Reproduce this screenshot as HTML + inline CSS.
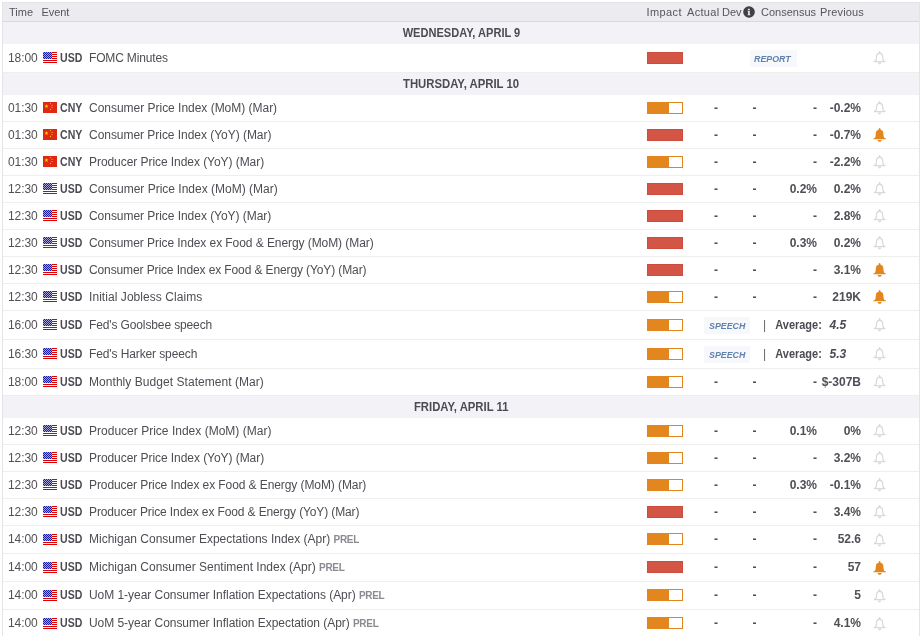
<!DOCTYPE html>
<html><head><meta charset="utf-8"><title>Economic Calendar</title><style>
*{margin:0;padding:0;box-sizing:border-box}
html,body{width:922px;height:636px;overflow:hidden;background:#fff}
body{position:relative;font-family:"Liberation Sans",sans-serif;color:#555}
.wrap{position:absolute;left:0;top:0;width:922px;height:636px;overflow:hidden;will-change:transform}
.frame{position:absolute;left:2px;top:2px;width:918px;height:700px;border:1px solid #e3e4e7;border-bottom:none}
.hdr{position:absolute;left:3px;top:3px;width:916px;height:19px;background:#ebebf0;border-bottom:1px solid #d9d9de;font-size:11px;line-height:18px;color:#55555c}
.hdr span{position:absolute;top:0}
.info{position:absolute;left:743px;top:6px;width:12px;height:12px}
.day{position:absolute;left:3px;width:916px;height:22px;background:#f2f2f7;text-align:center;font-weight:bold;font-size:12.5px;line-height:22px;color:#4b4b52}
.day span{display:inline-block;transform:scaleX(0.88)}
.row{position:absolute;left:3px;width:916px;border-bottom:1px solid #eeeeee;background:#fff;font-size:12px;white-space:nowrap}
.row>*{position:absolute}
.tm{left:5px;color:#505056;letter-spacing:-0.1px}
.fl{left:40px;top:50%;margin-top:-6px}
.cur{left:56.5px;font-weight:bold;font-size:12px;color:#4b4b52;transform:scaleX(0.88);transform-origin:0 0}
.nm{left:86px;color:#4d4d53;letter-spacing:-0.1px}
.prel{font-size:10px;color:#8a8a90;font-weight:bold;letter-spacing:-0.3px}
.imp{left:644px;top:50%;margin-top:-6px;width:36px;height:12px}
.imp.i3{background:#d35546;border:1px solid #cf4b3b}
.imp.i2{background:#fff;border:1px solid #e2841c}
.imp.i2 i{position:absolute;left:-1px;top:-1px;width:22px;height:12px;background:#e3861e}
.v{font-weight:bold;font-size:12px;color:#4f4f56}
.act{left:711px}
.dev{left:749.5px}
.cons{right:102px;text-align:right}
.prev{right:58px;text-align:right}
.bell{left:870px;top:6px}
.badge{top:50%;margin-top:-8px;height:17px;line-height:17px;background:#f7f8fb;color:#5f82ac;font-weight:bold;font-style:italic;font-size:9.8px;text-align:center}
.badge span{display:inline-block;transform:scaleX(0.9)}
.rep{left:747px;width:47px;text-indent:-1px}
.sp{left:701px;width:46px}
.bar{left:760px;font-size:12px;color:#666}
.avg{left:772px;font-weight:bold;font-size:12px;color:#4b4b52;transform:scaleX(0.915);transform-origin:3px 0}
.avgv{left:826.5px;font-weight:bold;font-style:italic;font-size:12px;color:#4b4b52}
</style></head>
<body><div class="wrap">
<svg width="0" height="0" style="position:absolute"><defs><pattern id="dots" width="2" height="2" patternUnits="userSpaceOnUse"><rect x="0" y="0" width="1" height="1" fill="#fff" fill-opacity="0.6"/><rect x="1" y="1" width="1" height="1" fill="#fff" fill-opacity="0.6"/></pattern></defs></svg>
<div class="frame"></div>
<div class="hdr"><span style="left:6px">Time</span><span style="left:38.5px;letter-spacing:-0.1px">Event</span><span style="left:643.5px;letter-spacing:0.4px">Impact</span><span style="left:684px;letter-spacing:0.3px">Actual</span><span style="left:719px">Dev</span><span style="left:758px">Consensus</span><span style="left:817px;letter-spacing:0.15px">Previous</span></div>
<svg class="info" viewBox="0 0 12 12"><circle cx="6" cy="6" r="5.8" fill="#3f3f46"/><rect x="4.9" y="2.8" width="1.9" height="1.3" fill="#e8e8ea"/><path d="M4.5 4.7 H6.8 V8.4 H7.4 V9.3 H4.5 V8.4 H5.1 V5.5 H4.5 Z" fill="#e8e8ea"/></svg>
<div class="day" style="top:22px"><span style="transform:scaleX(0.885)">WEDNESDAY, APRIL 9</span></div><div class="row" style="top:44px;height:29px;line-height:28px"><span class="tm">18:00</span><svg class="fl" width="14" height="11" viewBox="0 0 14 11"><rect width="14" height="11" fill="#fff"/><g fill="#d00"><rect y="0" width="14" height="1"/><rect y="2" width="14" height="1"/><rect y="4" width="14" height="1"/><rect y="6" width="14" height="1"/><rect y="8" width="14" height="1"/><rect y="10" width="14" height="1"/></g><rect width="9" height="7" fill="#1a1aa0"/><rect width="9" height="7" fill="url(#dots)"/></svg><span class="cur">USD</span><span class="nm" style="letter-spacing:-0.158px">FOMC Minutes</span><span class="imp i3" style="top:8px;margin-top:0"><i></i></span><span class="badge rep"><span>REPORT</span></span><svg class="bell" style="top:7px" width="13" height="14" viewBox="0 0 13 14"><ellipse cx="6.6" cy="1.2" rx="0.9" ry="1.2" fill="#d9d9db"/><path d="M6.6 2.4 C8.5 2.4 9.5 3.3 9.6 5.2 L9.9 8.4 C10 9.5 10.8 10.1 12 10.6 L1.2 10.6 C2.4 10.1 3.2 9.5 3.3 8.4 L3.6 5.2 C3.7 3.3 4.7 2.4 6.6 2.4 Z" fill="none" stroke="#d9d9db" stroke-width="1.2" stroke-linejoin="round"/><path d="M4.9 11.6 A1.7 1.8 0 0 0 8.3 11.6 Z" fill="#d9d9db"/></svg></div><div class="day" style="top:73px"><span style="transform:scaleX(0.907)">THURSDAY, APRIL 10</span></div><div class="row" style="top:95px;height:27px;line-height:26px"><span class="tm">01:30</span><svg class="fl" width="14" height="11" viewBox="0 0 14 11"><rect width="14" height="11" fill="#de2a12"/><path d="M3.5 2.2 L3.85 3.35 L5.05 3.35 L4.08 4.05 L4.45 5.2 L3.5 4.5 L2.55 5.2 L2.92 4.05 L1.95 3.35 L3.15 3.35 Z" fill="#ffe000" transform="translate(3.5 3.9) scale(1.35) translate(-3.5 -3.7)"/><g fill="#ffc000"><circle cx="7.5" cy="1.5" r="0.6"/><circle cx="9" cy="3.3" r="0.6"/><circle cx="9" cy="5.5" r="0.6"/><circle cx="7.5" cy="7.4" r="0.6"/></g></svg><span class="cur">CNY</span><span class="nm" style="letter-spacing:-0.019px">Consumer Price Index (MoM) (Mar)</span><span class="imp i2" style="top:7px;margin-top:0"><i></i></span><span class="v act">-</span><span class="v dev">-</span><span class="v cons">-</span><span class="v prev">-0.2%</span><svg class="bell" style="top:6px" width="13" height="14" viewBox="0 0 13 14"><ellipse cx="6.6" cy="1.2" rx="0.9" ry="1.2" fill="#d9d9db"/><path d="M6.6 2.4 C8.5 2.4 9.5 3.3 9.6 5.2 L9.9 8.4 C10 9.5 10.8 10.1 12 10.6 L1.2 10.6 C2.4 10.1 3.2 9.5 3.3 8.4 L3.6 5.2 C3.7 3.3 4.7 2.4 6.6 2.4 Z" fill="none" stroke="#d9d9db" stroke-width="1.2" stroke-linejoin="round"/><path d="M4.9 11.6 A1.7 1.8 0 0 0 8.3 11.6 Z" fill="#d9d9db"/></svg></div><div class="row" style="top:122px;height:27px;line-height:26px"><span class="tm">01:30</span><svg class="fl" width="14" height="11" viewBox="0 0 14 11"><rect width="14" height="11" fill="#de2a12"/><path d="M3.5 2.2 L3.85 3.35 L5.05 3.35 L4.08 4.05 L4.45 5.2 L3.5 4.5 L2.55 5.2 L2.92 4.05 L1.95 3.35 L3.15 3.35 Z" fill="#ffe000" transform="translate(3.5 3.9) scale(1.35) translate(-3.5 -3.7)"/><g fill="#ffc000"><circle cx="7.5" cy="1.5" r="0.6"/><circle cx="9" cy="3.3" r="0.6"/><circle cx="9" cy="5.5" r="0.6"/><circle cx="7.5" cy="7.4" r="0.6"/></g></svg><span class="cur">CNY</span><span class="nm" style="letter-spacing:-0.038px">Consumer Price Index (YoY) (Mar)</span><span class="imp i3" style="top:7px;margin-top:0"><i></i></span><span class="v act">-</span><span class="v dev">-</span><span class="v cons">-</span><span class="v prev">-0.7%</span><svg class="bell" style="top:6px" width="13" height="14" viewBox="0 0 13 14"><ellipse cx="6.6" cy="1.2" rx="0.9" ry="1.2" fill="#e3861e"/><path d="M6.6 1.8 C8.9 1.8 10.2 3 10.3 5 L10.7 8.5 C10.9 9.8 11.8 10.3 12.9 10.6 L12.9 11.2 L0.3 11.2 L0.3 10.6 C1.4 10.3 2.3 9.8 2.5 8.5 L2.9 5 C3 3 4.3 1.8 6.6 1.8 Z" fill="#e3861e"/><path d="M4.6 11.9 A2 1.9 0 0 0 8.6 11.9 Z" fill="#e3861e"/></svg></div><div class="row" style="top:149px;height:27px;line-height:26px"><span class="tm">01:30</span><svg class="fl" width="14" height="11" viewBox="0 0 14 11"><rect width="14" height="11" fill="#de2a12"/><path d="M3.5 2.2 L3.85 3.35 L5.05 3.35 L4.08 4.05 L4.45 5.2 L3.5 4.5 L2.55 5.2 L2.92 4.05 L1.95 3.35 L3.15 3.35 Z" fill="#ffe000" transform="translate(3.5 3.9) scale(1.35) translate(-3.5 -3.7)"/><g fill="#ffc000"><circle cx="7.5" cy="1.5" r="0.6"/><circle cx="9" cy="3.3" r="0.6"/><circle cx="9" cy="5.5" r="0.6"/><circle cx="7.5" cy="7.4" r="0.6"/></g></svg><span class="cur">CNY</span><span class="nm" style="letter-spacing:-0.059px">Producer Price Index (YoY) (Mar)</span><span class="imp i2" style="top:7px;margin-top:0"><i></i></span><span class="v act">-</span><span class="v dev">-</span><span class="v cons">-</span><span class="v prev">-2.2%</span><svg class="bell" style="top:6px" width="13" height="14" viewBox="0 0 13 14"><ellipse cx="6.6" cy="1.2" rx="0.9" ry="1.2" fill="#d9d9db"/><path d="M6.6 2.4 C8.5 2.4 9.5 3.3 9.6 5.2 L9.9 8.4 C10 9.5 10.8 10.1 12 10.6 L1.2 10.6 C2.4 10.1 3.2 9.5 3.3 8.4 L3.6 5.2 C3.7 3.3 4.7 2.4 6.6 2.4 Z" fill="none" stroke="#d9d9db" stroke-width="1.2" stroke-linejoin="round"/><path d="M4.9 11.6 A1.7 1.8 0 0 0 8.3 11.6 Z" fill="#d9d9db"/></svg></div><div class="row" style="top:176px;height:27px;line-height:26px"><span class="tm">12:30</span><svg class="fl" width="14" height="11" viewBox="0 0 14 11"><rect width="14" height="11" fill="#fff"/><g fill="#d00"><rect y="0" width="14" height="1"/><rect y="2" width="14" height="1"/><rect y="4" width="14" height="1"/><rect y="6" width="14" height="1"/><rect y="8" width="14" height="1"/><rect y="10" width="14" height="1"/></g><rect width="9" height="7" fill="#1a1aa0"/><rect width="9" height="7" fill="url(#dots)"/></svg><span class="cur">USD</span><span class="nm" style="letter-spacing:-0.000px">Consumer Price Index (MoM) (Mar)</span><span class="imp i3" style="top:7px;margin-top:0"><i></i></span><span class="v act">-</span><span class="v dev">-</span><span class="v cons">0.2%</span><span class="v prev">0.2%</span><svg class="bell" style="top:6px" width="13" height="14" viewBox="0 0 13 14"><ellipse cx="6.6" cy="1.2" rx="0.9" ry="1.2" fill="#d9d9db"/><path d="M6.6 2.4 C8.5 2.4 9.5 3.3 9.6 5.2 L9.9 8.4 C10 9.5 10.8 10.1 12 10.6 L1.2 10.6 C2.4 10.1 3.2 9.5 3.3 8.4 L3.6 5.2 C3.7 3.3 4.7 2.4 6.6 2.4 Z" fill="none" stroke="#d9d9db" stroke-width="1.2" stroke-linejoin="round"/><path d="M4.9 11.6 A1.7 1.8 0 0 0 8.3 11.6 Z" fill="#d9d9db"/></svg></div><div class="row" style="top:203px;height:27px;line-height:26px"><span class="tm">12:30</span><svg class="fl" width="14" height="11" viewBox="0 0 14 11"><rect width="14" height="11" fill="#fff"/><g fill="#d00"><rect y="0" width="14" height="1"/><rect y="2" width="14" height="1"/><rect y="4" width="14" height="1"/><rect y="6" width="14" height="1"/><rect y="8" width="14" height="1"/><rect y="10" width="14" height="1"/></g><rect width="9" height="7" fill="#1a1aa0"/><rect width="9" height="7" fill="url(#dots)"/></svg><span class="cur">USD</span><span class="nm" style="letter-spacing:-0.044px">Consumer Price Index (YoY) (Mar)</span><span class="imp i3" style="top:7px;margin-top:0"><i></i></span><span class="v act">-</span><span class="v dev">-</span><span class="v cons">-</span><span class="v prev">2.8%</span><svg class="bell" style="top:6px" width="13" height="14" viewBox="0 0 13 14"><ellipse cx="6.6" cy="1.2" rx="0.9" ry="1.2" fill="#d9d9db"/><path d="M6.6 2.4 C8.5 2.4 9.5 3.3 9.6 5.2 L9.9 8.4 C10 9.5 10.8 10.1 12 10.6 L1.2 10.6 C2.4 10.1 3.2 9.5 3.3 8.4 L3.6 5.2 C3.7 3.3 4.7 2.4 6.6 2.4 Z" fill="none" stroke="#d9d9db" stroke-width="1.2" stroke-linejoin="round"/><path d="M4.9 11.6 A1.7 1.8 0 0 0 8.3 11.6 Z" fill="#d9d9db"/></svg></div><div class="row" style="top:230px;height:27px;line-height:26px"><span class="tm">12:30</span><svg class="fl" width="14" height="11" viewBox="0 0 14 11"><rect width="14" height="11" fill="#fff"/><g fill="#d00"><rect y="0" width="14" height="1"/><rect y="2" width="14" height="1"/><rect y="4" width="14" height="1"/><rect y="6" width="14" height="1"/><rect y="8" width="14" height="1"/><rect y="10" width="14" height="1"/></g><rect width="9" height="7" fill="#1a1aa0"/><rect width="9" height="7" fill="url(#dots)"/></svg><span class="cur">USD</span><span class="nm" style="letter-spacing:-0.071px">Consumer Price Index ex Food &amp; Energy (MoM) (Mar)</span><span class="imp i3" style="top:7px;margin-top:0"><i></i></span><span class="v act">-</span><span class="v dev">-</span><span class="v cons">0.3%</span><span class="v prev">0.2%</span><svg class="bell" style="top:6px" width="13" height="14" viewBox="0 0 13 14"><ellipse cx="6.6" cy="1.2" rx="0.9" ry="1.2" fill="#d9d9db"/><path d="M6.6 2.4 C8.5 2.4 9.5 3.3 9.6 5.2 L9.9 8.4 C10 9.5 10.8 10.1 12 10.6 L1.2 10.6 C2.4 10.1 3.2 9.5 3.3 8.4 L3.6 5.2 C3.7 3.3 4.7 2.4 6.6 2.4 Z" fill="none" stroke="#d9d9db" stroke-width="1.2" stroke-linejoin="round"/><path d="M4.9 11.6 A1.7 1.8 0 0 0 8.3 11.6 Z" fill="#d9d9db"/></svg></div><div class="row" style="top:257px;height:27px;line-height:26px"><span class="tm">12:30</span><svg class="fl" width="14" height="11" viewBox="0 0 14 11"><rect width="14" height="11" fill="#fff"/><g fill="#d00"><rect y="0" width="14" height="1"/><rect y="2" width="14" height="1"/><rect y="4" width="14" height="1"/><rect y="6" width="14" height="1"/><rect y="8" width="14" height="1"/><rect y="10" width="14" height="1"/></g><rect width="9" height="7" fill="#1a1aa0"/><rect width="9" height="7" fill="url(#dots)"/></svg><span class="cur">USD</span><span class="nm" style="letter-spacing:-0.114px">Consumer Price Index ex Food &amp; Energy (YoY) (Mar)</span><span class="imp i3" style="top:7px;margin-top:0"><i></i></span><span class="v act">-</span><span class="v dev">-</span><span class="v cons">-</span><span class="v prev">3.1%</span><svg class="bell" style="top:6px" width="13" height="14" viewBox="0 0 13 14"><ellipse cx="6.6" cy="1.2" rx="0.9" ry="1.2" fill="#e3861e"/><path d="M6.6 1.8 C8.9 1.8 10.2 3 10.3 5 L10.7 8.5 C10.9 9.8 11.8 10.3 12.9 10.6 L12.9 11.2 L0.3 11.2 L0.3 10.6 C1.4 10.3 2.3 9.8 2.5 8.5 L2.9 5 C3 3 4.3 1.8 6.6 1.8 Z" fill="#e3861e"/><path d="M4.6 11.9 A2 1.9 0 0 0 8.6 11.9 Z" fill="#e3861e"/></svg></div><div class="row" style="top:284px;height:27px;line-height:26px"><span class="tm">12:30</span><svg class="fl" width="14" height="11" viewBox="0 0 14 11"><rect width="14" height="11" fill="#fff"/><g fill="#d00"><rect y="0" width="14" height="1"/><rect y="2" width="14" height="1"/><rect y="4" width="14" height="1"/><rect y="6" width="14" height="1"/><rect y="8" width="14" height="1"/><rect y="10" width="14" height="1"/></g><rect width="9" height="7" fill="#1a1aa0"/><rect width="9" height="7" fill="url(#dots)"/></svg><span class="cur">USD</span><span class="nm" style="letter-spacing:0.059px">Initial Jobless Claims</span><span class="imp i2" style="top:7px;margin-top:0"><i></i></span><span class="v act">-</span><span class="v dev">-</span><span class="v cons">-</span><span class="v prev">219K</span><svg class="bell" style="top:6px" width="13" height="14" viewBox="0 0 13 14"><ellipse cx="6.6" cy="1.2" rx="0.9" ry="1.2" fill="#e3861e"/><path d="M6.6 1.8 C8.9 1.8 10.2 3 10.3 5 L10.7 8.5 C10.9 9.8 11.8 10.3 12.9 10.6 L12.9 11.2 L0.3 11.2 L0.3 10.6 C1.4 10.3 2.3 9.8 2.5 8.5 L2.9 5 C3 3 4.3 1.8 6.6 1.8 Z" fill="#e3861e"/><path d="M4.6 11.9 A2 1.9 0 0 0 8.6 11.9 Z" fill="#e3861e"/></svg></div><div class="row" style="top:311px;height:29px;line-height:28px"><span class="tm">16:00</span><svg class="fl" width="14" height="11" viewBox="0 0 14 11"><rect width="14" height="11" fill="#fff"/><g fill="#d00"><rect y="0" width="14" height="1"/><rect y="2" width="14" height="1"/><rect y="4" width="14" height="1"/><rect y="6" width="14" height="1"/><rect y="8" width="14" height="1"/><rect y="10" width="14" height="1"/></g><rect width="9" height="7" fill="#1a1aa0"/><rect width="9" height="7" fill="url(#dots)"/></svg><span class="cur">USD</span><span class="nm" style="letter-spacing:-0.124px">Fed's Goolsbee speech</span><span class="imp i2" style="top:8px;margin-top:0"><i></i></span><span class="badge sp"><span>SPEECH</span></span><span class="bar">|</span><span class="avg">Average:</span><span class="avgv">4.5</span><svg class="bell" style="top:7px" width="13" height="14" viewBox="0 0 13 14"><ellipse cx="6.6" cy="1.2" rx="0.9" ry="1.2" fill="#d9d9db"/><path d="M6.6 2.4 C8.5 2.4 9.5 3.3 9.6 5.2 L9.9 8.4 C10 9.5 10.8 10.1 12 10.6 L1.2 10.6 C2.4 10.1 3.2 9.5 3.3 8.4 L3.6 5.2 C3.7 3.3 4.7 2.4 6.6 2.4 Z" fill="none" stroke="#d9d9db" stroke-width="1.2" stroke-linejoin="round"/><path d="M4.9 11.6 A1.7 1.8 0 0 0 8.3 11.6 Z" fill="#d9d9db"/></svg></div><div class="row" style="top:340px;height:29px;line-height:28px"><span class="tm">16:30</span><svg class="fl" width="14" height="11" viewBox="0 0 14 11"><rect width="14" height="11" fill="#fff"/><g fill="#d00"><rect y="0" width="14" height="1"/><rect y="2" width="14" height="1"/><rect y="4" width="14" height="1"/><rect y="6" width="14" height="1"/><rect y="8" width="14" height="1"/><rect y="10" width="14" height="1"/></g><rect width="9" height="7" fill="#1a1aa0"/><rect width="9" height="7" fill="url(#dots)"/></svg><span class="cur">USD</span><span class="nm" style="letter-spacing:-0.111px">Fed's Harker speech</span><span class="imp i2" style="top:8px;margin-top:0"><i></i></span><span class="badge sp"><span>SPEECH</span></span><span class="bar">|</span><span class="avg">Average:</span><span class="avgv">5.3</span><svg class="bell" style="top:7px" width="13" height="14" viewBox="0 0 13 14"><ellipse cx="6.6" cy="1.2" rx="0.9" ry="1.2" fill="#d9d9db"/><path d="M6.6 2.4 C8.5 2.4 9.5 3.3 9.6 5.2 L9.9 8.4 C10 9.5 10.8 10.1 12 10.6 L1.2 10.6 C2.4 10.1 3.2 9.5 3.3 8.4 L3.6 5.2 C3.7 3.3 4.7 2.4 6.6 2.4 Z" fill="none" stroke="#d9d9db" stroke-width="1.2" stroke-linejoin="round"/><path d="M4.9 11.6 A1.7 1.8 0 0 0 8.3 11.6 Z" fill="#d9d9db"/></svg></div><div class="row" style="top:369px;height:27px;line-height:26px"><span class="tm">18:00</span><svg class="fl" width="14" height="11" viewBox="0 0 14 11"><rect width="14" height="11" fill="#fff"/><g fill="#d00"><rect y="0" width="14" height="1"/><rect y="2" width="14" height="1"/><rect y="4" width="14" height="1"/><rect y="6" width="14" height="1"/><rect y="8" width="14" height="1"/><rect y="10" width="14" height="1"/></g><rect width="9" height="7" fill="#1a1aa0"/><rect width="9" height="7" fill="url(#dots)"/></svg><span class="cur">USD</span><span class="nm" style="letter-spacing:0.050px">Monthly Budget Statement (Mar)</span><span class="imp i2" style="top:7px;margin-top:0"><i></i></span><span class="v act">-</span><span class="v dev">-</span><span class="v cons">-</span><span class="v prev">$-307B</span><svg class="bell" style="top:6px" width="13" height="14" viewBox="0 0 13 14"><ellipse cx="6.6" cy="1.2" rx="0.9" ry="1.2" fill="#d9d9db"/><path d="M6.6 2.4 C8.5 2.4 9.5 3.3 9.6 5.2 L9.9 8.4 C10 9.5 10.8 10.1 12 10.6 L1.2 10.6 C2.4 10.1 3.2 9.5 3.3 8.4 L3.6 5.2 C3.7 3.3 4.7 2.4 6.6 2.4 Z" fill="none" stroke="#d9d9db" stroke-width="1.2" stroke-linejoin="round"/><path d="M4.9 11.6 A1.7 1.8 0 0 0 8.3 11.6 Z" fill="#d9d9db"/></svg></div><div class="day" style="top:396px"><span style="transform:scaleX(0.905)">FRIDAY, APRIL 11</span></div><div class="row" style="top:418px;height:27px;line-height:26px"><span class="tm">12:30</span><svg class="fl" width="14" height="11" viewBox="0 0 14 11"><rect width="14" height="11" fill="#fff"/><g fill="#d00"><rect y="0" width="14" height="1"/><rect y="2" width="14" height="1"/><rect y="4" width="14" height="1"/><rect y="6" width="14" height="1"/><rect y="8" width="14" height="1"/><rect y="10" width="14" height="1"/></g><rect width="9" height="7" fill="#1a1aa0"/><rect width="9" height="7" fill="url(#dots)"/></svg><span class="cur">USD</span><span class="nm" style="letter-spacing:0.012px">Producer Price Index (MoM) (Mar)</span><span class="imp i2" style="top:7px;margin-top:0"><i></i></span><span class="v act">-</span><span class="v dev">-</span><span class="v cons">0.1%</span><span class="v prev">0%</span><svg class="bell" style="top:6px" width="13" height="14" viewBox="0 0 13 14"><ellipse cx="6.6" cy="1.2" rx="0.9" ry="1.2" fill="#d9d9db"/><path d="M6.6 2.4 C8.5 2.4 9.5 3.3 9.6 5.2 L9.9 8.4 C10 9.5 10.8 10.1 12 10.6 L1.2 10.6 C2.4 10.1 3.2 9.5 3.3 8.4 L3.6 5.2 C3.7 3.3 4.7 2.4 6.6 2.4 Z" fill="none" stroke="#d9d9db" stroke-width="1.2" stroke-linejoin="round"/><path d="M4.9 11.6 A1.7 1.8 0 0 0 8.3 11.6 Z" fill="#d9d9db"/></svg></div><div class="row" style="top:445px;height:27px;line-height:26px"><span class="tm">12:30</span><svg class="fl" width="14" height="11" viewBox="0 0 14 11"><rect width="14" height="11" fill="#fff"/><g fill="#d00"><rect y="0" width="14" height="1"/><rect y="2" width="14" height="1"/><rect y="4" width="14" height="1"/><rect y="6" width="14" height="1"/><rect y="8" width="14" height="1"/><rect y="10" width="14" height="1"/></g><rect width="9" height="7" fill="#1a1aa0"/><rect width="9" height="7" fill="url(#dots)"/></svg><span class="cur">USD</span><span class="nm" style="letter-spacing:-0.059px">Producer Price Index (YoY) (Mar)</span><span class="imp i2" style="top:7px;margin-top:0"><i></i></span><span class="v act">-</span><span class="v dev">-</span><span class="v cons">-</span><span class="v prev">3.2%</span><svg class="bell" style="top:6px" width="13" height="14" viewBox="0 0 13 14"><ellipse cx="6.6" cy="1.2" rx="0.9" ry="1.2" fill="#d9d9db"/><path d="M6.6 2.4 C8.5 2.4 9.5 3.3 9.6 5.2 L9.9 8.4 C10 9.5 10.8 10.1 12 10.6 L1.2 10.6 C2.4 10.1 3.2 9.5 3.3 8.4 L3.6 5.2 C3.7 3.3 4.7 2.4 6.6 2.4 Z" fill="none" stroke="#d9d9db" stroke-width="1.2" stroke-linejoin="round"/><path d="M4.9 11.6 A1.7 1.8 0 0 0 8.3 11.6 Z" fill="#d9d9db"/></svg></div><div class="row" style="top:472px;height:27px;line-height:26px"><span class="tm">12:30</span><svg class="fl" width="14" height="11" viewBox="0 0 14 11"><rect width="14" height="11" fill="#fff"/><g fill="#d00"><rect y="0" width="14" height="1"/><rect y="2" width="14" height="1"/><rect y="4" width="14" height="1"/><rect y="6" width="14" height="1"/><rect y="8" width="14" height="1"/><rect y="10" width="14" height="1"/></g><rect width="9" height="7" fill="#1a1aa0"/><rect width="9" height="7" fill="url(#dots)"/></svg><span class="cur">USD</span><span class="nm" style="letter-spacing:-0.086px">Producer Price Index ex Food &amp; Energy (MoM) (Mar)</span><span class="imp i2" style="top:7px;margin-top:0"><i></i></span><span class="v act">-</span><span class="v dev">-</span><span class="v cons">0.3%</span><span class="v prev">-0.1%</span><svg class="bell" style="top:6px" width="13" height="14" viewBox="0 0 13 14"><ellipse cx="6.6" cy="1.2" rx="0.9" ry="1.2" fill="#d9d9db"/><path d="M6.6 2.4 C8.5 2.4 9.5 3.3 9.6 5.2 L9.9 8.4 C10 9.5 10.8 10.1 12 10.6 L1.2 10.6 C2.4 10.1 3.2 9.5 3.3 8.4 L3.6 5.2 C3.7 3.3 4.7 2.4 6.6 2.4 Z" fill="none" stroke="#d9d9db" stroke-width="1.2" stroke-linejoin="round"/><path d="M4.9 11.6 A1.7 1.8 0 0 0 8.3 11.6 Z" fill="#d9d9db"/></svg></div><div class="row" style="top:499px;height:27px;line-height:26px"><span class="tm">12:30</span><svg class="fl" width="14" height="11" viewBox="0 0 14 11"><rect width="14" height="11" fill="#fff"/><g fill="#d00"><rect y="0" width="14" height="1"/><rect y="2" width="14" height="1"/><rect y="4" width="14" height="1"/><rect y="6" width="14" height="1"/><rect y="8" width="14" height="1"/><rect y="10" width="14" height="1"/></g><rect width="9" height="7" fill="#1a1aa0"/><rect width="9" height="7" fill="url(#dots)"/></svg><span class="cur">USD</span><span class="nm" style="letter-spacing:-0.122px">Producer Price Index ex Food &amp; Energy (YoY) (Mar)</span><span class="imp i3" style="top:7px;margin-top:0"><i></i></span><span class="v act">-</span><span class="v dev">-</span><span class="v cons">-</span><span class="v prev">3.4%</span><svg class="bell" style="top:6px" width="13" height="14" viewBox="0 0 13 14"><ellipse cx="6.6" cy="1.2" rx="0.9" ry="1.2" fill="#d9d9db"/><path d="M6.6 2.4 C8.5 2.4 9.5 3.3 9.6 5.2 L9.9 8.4 C10 9.5 10.8 10.1 12 10.6 L1.2 10.6 C2.4 10.1 3.2 9.5 3.3 8.4 L3.6 5.2 C3.7 3.3 4.7 2.4 6.6 2.4 Z" fill="none" stroke="#d9d9db" stroke-width="1.2" stroke-linejoin="round"/><path d="M4.9 11.6 A1.7 1.8 0 0 0 8.3 11.6 Z" fill="#d9d9db"/></svg></div><div class="row" style="top:526px;height:28px;line-height:27px"><span class="tm">14:00</span><svg class="fl" width="14" height="11" viewBox="0 0 14 11"><rect width="14" height="11" fill="#fff"/><g fill="#d00"><rect y="0" width="14" height="1"/><rect y="2" width="14" height="1"/><rect y="4" width="14" height="1"/><rect y="6" width="14" height="1"/><rect y="8" width="14" height="1"/><rect y="10" width="14" height="1"/></g><rect width="9" height="7" fill="#1a1aa0"/><rect width="9" height="7" fill="url(#dots)"/></svg><span class="cur">USD</span><span class="nm" style="letter-spacing:-0.005px">Michigan Consumer Expectations Index (Apr) <b class="prel">PREL</b></span><span class="imp i2" style="top:7px;margin-top:0"><i></i></span><span class="v act">-</span><span class="v dev">-</span><span class="v cons">-</span><span class="v prev">52.6</span><svg class="bell" style="top:7px" width="13" height="14" viewBox="0 0 13 14"><ellipse cx="6.6" cy="1.2" rx="0.9" ry="1.2" fill="#d9d9db"/><path d="M6.6 2.4 C8.5 2.4 9.5 3.3 9.6 5.2 L9.9 8.4 C10 9.5 10.8 10.1 12 10.6 L1.2 10.6 C2.4 10.1 3.2 9.5 3.3 8.4 L3.6 5.2 C3.7 3.3 4.7 2.4 6.6 2.4 Z" fill="none" stroke="#d9d9db" stroke-width="1.2" stroke-linejoin="round"/><path d="M4.9 11.6 A1.7 1.8 0 0 0 8.3 11.6 Z" fill="#d9d9db"/></svg></div><div class="row" style="top:554px;height:28px;line-height:27px"><span class="tm">14:00</span><svg class="fl" width="14" height="11" viewBox="0 0 14 11"><rect width="14" height="11" fill="#fff"/><g fill="#d00"><rect y="0" width="14" height="1"/><rect y="2" width="14" height="1"/><rect y="4" width="14" height="1"/><rect y="6" width="14" height="1"/><rect y="8" width="14" height="1"/><rect y="10" width="14" height="1"/></g><rect width="9" height="7" fill="#1a1aa0"/><rect width="9" height="7" fill="url(#dots)"/></svg><span class="cur">USD</span><span class="nm" style="letter-spacing:-0.002px">Michigan Consumer Sentiment Index (Apr) <b class="prel">PREL</b></span><span class="imp i3" style="top:7px;margin-top:0"><i></i></span><span class="v act">-</span><span class="v dev">-</span><span class="v cons">-</span><span class="v prev">57</span><svg class="bell" style="top:7px" width="13" height="14" viewBox="0 0 13 14"><ellipse cx="6.6" cy="1.2" rx="0.9" ry="1.2" fill="#e3861e"/><path d="M6.6 1.8 C8.9 1.8 10.2 3 10.3 5 L10.7 8.5 C10.9 9.8 11.8 10.3 12.9 10.6 L12.9 11.2 L0.3 11.2 L0.3 10.6 C1.4 10.3 2.3 9.8 2.5 8.5 L2.9 5 C3 3 4.3 1.8 6.6 1.8 Z" fill="#e3861e"/><path d="M4.6 11.9 A2 1.9 0 0 0 8.6 11.9 Z" fill="#e3861e"/></svg></div><div class="row" style="top:582px;height:28px;line-height:27px"><span class="tm">14:00</span><svg class="fl" width="14" height="11" viewBox="0 0 14 11"><rect width="14" height="11" fill="#fff"/><g fill="#d00"><rect y="0" width="14" height="1"/><rect y="2" width="14" height="1"/><rect y="4" width="14" height="1"/><rect y="6" width="14" height="1"/><rect y="8" width="14" height="1"/><rect y="10" width="14" height="1"/></g><rect width="9" height="7" fill="#1a1aa0"/><rect width="9" height="7" fill="url(#dots)"/></svg><span class="cur">USD</span><span class="nm" style="letter-spacing:-0.045px">UoM 1-year Consumer Inflation Expectations (Apr) <b class="prel">PREL</b></span><span class="imp i2" style="top:7px;margin-top:0"><i></i></span><span class="v act">-</span><span class="v dev">-</span><span class="v cons">-</span><span class="v prev">5</span><svg class="bell" style="top:7px" width="13" height="14" viewBox="0 0 13 14"><ellipse cx="6.6" cy="1.2" rx="0.9" ry="1.2" fill="#d9d9db"/><path d="M6.6 2.4 C8.5 2.4 9.5 3.3 9.6 5.2 L9.9 8.4 C10 9.5 10.8 10.1 12 10.6 L1.2 10.6 C2.4 10.1 3.2 9.5 3.3 8.4 L3.6 5.2 C3.7 3.3 4.7 2.4 6.6 2.4 Z" fill="none" stroke="#d9d9db" stroke-width="1.2" stroke-linejoin="round"/><path d="M4.9 11.6 A1.7 1.8 0 0 0 8.3 11.6 Z" fill="#d9d9db"/></svg></div><div class="row" style="top:610px;height:28px;line-height:27px"><span class="tm">14:00</span><svg class="fl" width="14" height="11" viewBox="0 0 14 11"><rect width="14" height="11" fill="#fff"/><g fill="#d00"><rect y="0" width="14" height="1"/><rect y="2" width="14" height="1"/><rect y="4" width="14" height="1"/><rect y="6" width="14" height="1"/><rect y="8" width="14" height="1"/><rect y="10" width="14" height="1"/></g><rect width="9" height="7" fill="#1a1aa0"/><rect width="9" height="7" fill="url(#dots)"/></svg><span class="cur">USD</span><span class="nm" style="letter-spacing:-0.044px">UoM 5-year Consumer Inflation Expectation (Apr) <b class="prel">PREL</b></span><span class="imp i2" style="top:7px;margin-top:0"><i></i></span><span class="v act">-</span><span class="v dev">-</span><span class="v cons">-</span><span class="v prev">4.1%</span><svg class="bell" style="top:7px" width="13" height="14" viewBox="0 0 13 14"><ellipse cx="6.6" cy="1.2" rx="0.9" ry="1.2" fill="#d9d9db"/><path d="M6.6 2.4 C8.5 2.4 9.5 3.3 9.6 5.2 L9.9 8.4 C10 9.5 10.8 10.1 12 10.6 L1.2 10.6 C2.4 10.1 3.2 9.5 3.3 8.4 L3.6 5.2 C3.7 3.3 4.7 2.4 6.6 2.4 Z" fill="none" stroke="#d9d9db" stroke-width="1.2" stroke-linejoin="round"/><path d="M4.9 11.6 A1.7 1.8 0 0 0 8.3 11.6 Z" fill="#d9d9db"/></svg></div>
</div></body></html>
